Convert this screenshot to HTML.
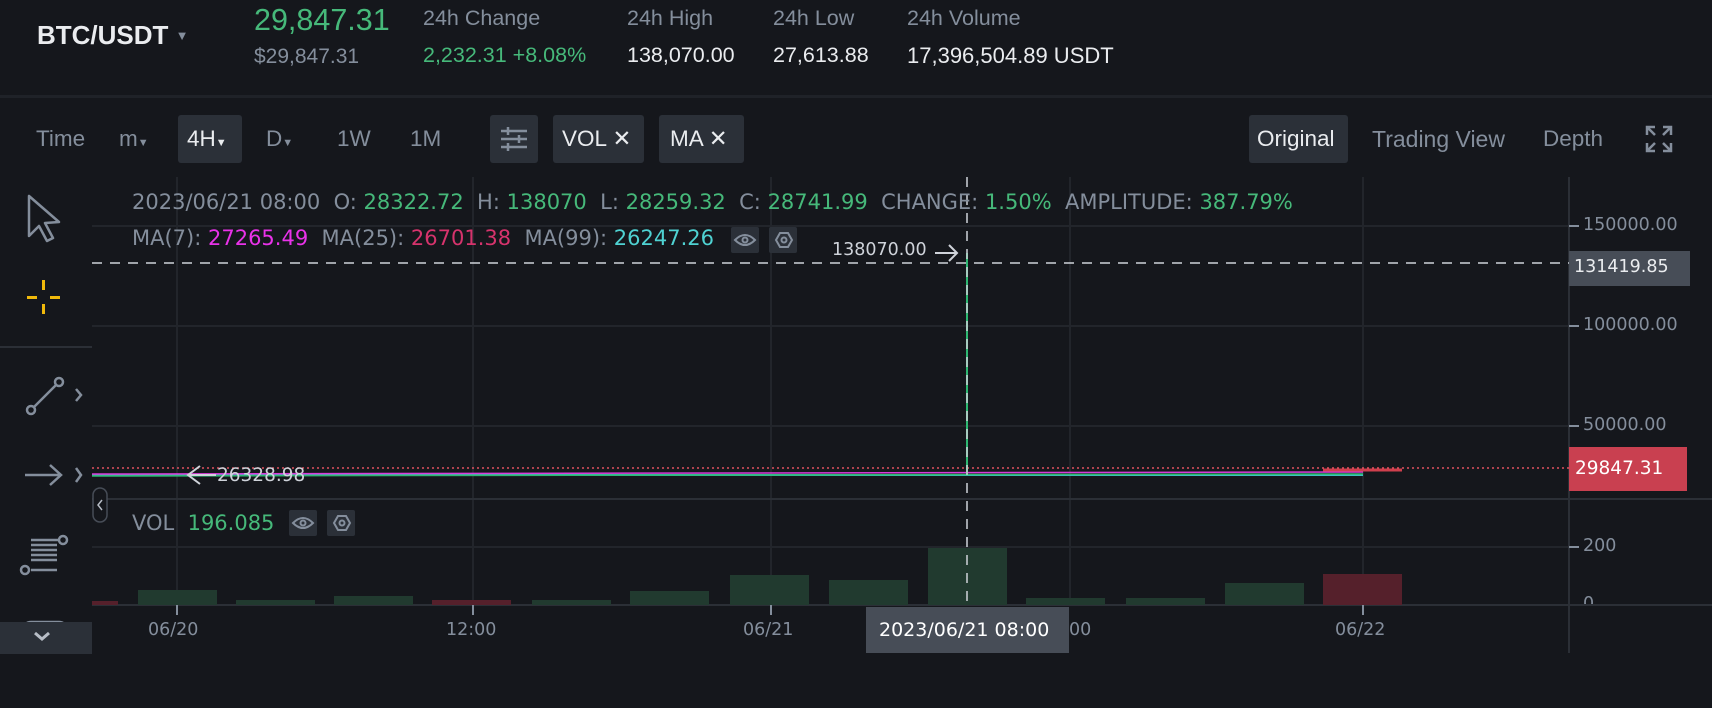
<!DOCTYPE html>
<html><head><meta charset="utf-8"><style>
*{margin:0;padding:0;box-sizing:border-box}
body{width:1712px;height:708px;background:#15171c;overflow:hidden;font-family:"Liberation Sans",sans-serif;color:#eaecef;position:relative}
.a{position:absolute;white-space:nowrap}
.d{font-family:"DejaVu Sans",sans-serif}
.g{color:#848e9c}.gr{color:#46b97a}
.btn{position:absolute;top:115px;height:48px;background:#2b3038;border-radius:3px}
.tb{position:absolute;top:126px;font-size:22.5px;color:#848e9c}
</style></head><body>
<div class="a" style="left:37px;top:20px;font-size:26px;font-weight:bold;color:#eaecef">BTC/USDT <span style="font-size:13px;color:#848e9c;position:relative;top:-4px">▼</span></div>
<div class="a gr" style="left:254px;top:3px;font-size:30.5px">29,847.31</div>
<div class="a g" style="left:254px;top:45px;font-size:21px">$29,847.31</div>
<div class="a g" style="left:423px;top:6px;font-size:21.5px">24h Change</div>
<div class="a gr" style="left:423px;top:43px;font-size:21.5px">2,232.31 +8.08%</div>
<div class="a g" style="left:627px;top:6px;font-size:21.5px">24h High</div>
<div class="a" style="left:627px;top:43px;font-size:21.5px">138,070.00</div>
<div class="a g" style="left:773px;top:6px;font-size:21.5px">24h Low</div>
<div class="a" style="left:773px;top:43px;font-size:21.5px">27,613.88</div>
<div class="a g" style="left:907px;top:6px;font-size:21.5px">24h Volume</div>
<div class="a" style="left:907px;top:43px;font-size:22px">17,396,504.89 USDT</div>
<div class="a" style="left:0;top:95px;width:1712px;height:3px;background:#1f2228"></div>

<div class="tb" style="left:36px">Time</div>
<div class="tb" style="left:119px">m<span style="font-size:11px">▼</span></div>
<div class="btn" style="left:178px;width:64px"></div>
<div class="tb" style="left:187px;color:#eaecef">4H<span style="font-size:11px">▼</span></div>
<div class="tb" style="left:266px">D<span style="font-size:11px">▼</span></div>
<div class="tb" style="left:337px">1W</div>
<div class="tb" style="left:410px">1M</div>
<div class="btn" style="left:490px;width:48px"></div>
<svg class="a" style="left:500px;top:125px" width="28" height="28" viewBox="0 0 28 28" stroke="#848e9c" stroke-width="2.5" fill="none"><path d="M1 6h26M1 14h26M1 22h26M8 2v8M19 10v8M8 18v8"/></svg>
<div class="btn" style="left:553px;width:91px"></div>
<div class="tb" style="left:562px;color:#eaecef">VOL ✕</div>
<div class="btn" style="left:659px;width:85px"></div>
<div class="tb" style="left:670px;color:#eaecef">MA ✕</div>
<div class="btn" style="left:1249px;width:99px"></div>
<div class="tb" style="left:1257px;color:#eaecef">Original</div>
<div class="tb" style="left:1372px;font-size:23px">Trading View</div>
<div class="tb" style="left:1543px">Depth</div>
<svg class="a" style="left:1645px;top:125px" width="28" height="28" viewBox="0 0 28 28" stroke="#848e9c" stroke-width="2.5" fill="none"><path d="M2 10V2h8M2 2l8 8M26 10V2h-8M26 2l-8 8M2 18v8h8M2 26l8-8M26 18v8h-8M26 26l-8-8"/></svg>

<svg class="a" style="left:0;top:0" width="1712" height="708">
<g stroke="#22252b" stroke-width="2">
<line x1="177" y1="177" x2="177" y2="605"/><line x1="473" y1="177" x2="473" y2="605"/><line x1="771" y1="177" x2="771" y2="605"/><line x1="1070" y1="177" x2="1070" y2="605"/><line x1="1363" y1="177" x2="1363" y2="605"/>
<line x1="92" y1="226" x2="1569" y2="226"/><line x1="92" y1="326" x2="1569" y2="326"/><line x1="92" y1="426" x2="1569" y2="426"/><line x1="92" y1="547" x2="1569" y2="547"/>
</g>
<line x1="92" y1="499" x2="1712" y2="499" stroke="#2b2f36" stroke-width="2"/>
<line x1="92" y1="605" x2="1712" y2="605" stroke="#2b2f36" stroke-width="2"/>
<line x1="1569" y1="177" x2="1569" y2="653" stroke="#2b2f36" stroke-width="2"/>
<line x1="0" y1="347" x2="92" y2="347" stroke="#2b2f36" stroke-width="2"/>
<g stroke="#848e9c" stroke-width="2"><line x1="1569" y1="226" x2="1579" y2="226"/><line x1="1569" y1="326" x2="1579" y2="326"/><line x1="1569" y1="426" x2="1579" y2="426"/><line x1="1569" y1="547" x2="1579" y2="547"/><line x1="177" y1="605" x2="177" y2="615"/><line x1="473" y1="605" x2="473" y2="615"/><line x1="771" y1="605" x2="771" y2="615"/><line x1="1363" y1="605" x2="1363" y2="615"/></g>
<g fill="#213a2f">
<rect x="138" y="590" width="79" height="15"/><rect x="236" y="600" width="79" height="5"/><rect x="334" y="596" width="79" height="9"/><rect x="532" y="600" width="79" height="5"/><rect x="630" y="591" width="79" height="14"/><rect x="730" y="575" width="79" height="30"/><rect x="829" y="580" width="79" height="25"/><rect x="928" y="548" width="79" height="57"/><rect x="1026" y="598" width="79" height="7"/><rect x="1126" y="598" width="79" height="7"/><rect x="1225" y="583" width="79" height="22"/>
</g>
<g fill="#55202b"><rect x="92" y="601" width="26" height="4"/><rect x="432" y="600" width="79" height="5"/><rect x="1323" y="574" width="79" height="31"/></g>
<line x1="92" y1="468" x2="1569" y2="468" stroke="#e0505f" stroke-width="1.5" stroke-dasharray="2 3"/>
<line x1="92" y1="475" x2="1363" y2="475" stroke="#3cc0c0" stroke-width="2"/>
<line x1="92" y1="474" x2="1363" y2="472" stroke="#d83cd8" stroke-width="1.5"/>
<line x1="92" y1="476" x2="1363" y2="474" stroke="#2eb872" stroke-width="1.5"/>
<line x1="1323" y1="470" x2="1402" y2="470" stroke="#cf3f4d" stroke-width="3"/>
<line x1="967" y1="253" x2="967" y2="475" stroke="#2eb872" stroke-width="2"/>
<line x1="92" y1="263" x2="1569" y2="263" stroke="#cfd3da" stroke-width="1.5" stroke-dasharray="10 8"/>
<line x1="967" y1="177" x2="967" y2="653" stroke="#cfd3da" stroke-width="1.5" stroke-dasharray="10 8"/>
<path d="M935 253h22M949 245l8 8-8 8" stroke="#cfd3da" stroke-width="2" fill="none"/>
<path d="M188 475h28M200 466l-12 9 12 9" stroke="#cfd3da" stroke-width="2" fill="none"/>
<path d="M29 196l0 40 10-10 8 15 6-3-8-15 14-1z" stroke="#848e9c" stroke-width="2.5" fill="none" stroke-linejoin="round"/>
<g fill="#f0b90b"><rect x="42" y="280" width="3" height="10"/><rect x="42" y="304" width="3" height="10"/><rect x="27" y="296" width="10" height="3"/><rect x="50" y="296" width="10" height="3"/></g>
<g stroke="#848e9c" stroke-width="2.5" fill="none"><circle cx="31" cy="410" r="4"/><circle cx="59" cy="382" r="4"/><line x1="34" y1="407" x2="56" y2="385"/><path d="M76 389l5 6-5 6"/><path d="M25 475h35M50 465l11 10-11 10"/><path d="M76 468l5 7-5 7"/><circle cx="25" cy="570" r="4"/><circle cx="63" cy="540" r="4"/><path d="M31 540h28M31 545h26M31 550h26M31 555h26M31 560h26M31 570h26"/><path d="M25 628q0-6 6-6h28q6 0 6 6"/></g>
<rect x="0" y="622" width="92" height="32" fill="#2b3038"/>
<path d="M35 633l7 6 7-6" stroke="#b7bdc6" stroke-width="3" fill="none"/>
<rect x="93" y="488" width="14" height="34" rx="7" fill="#15171c" stroke="#474d57" stroke-width="1.5"/>
<path d="M102 500l-4 5 4 5" stroke="#b7bdc6" stroke-width="1.5" fill="none"/>
<rect x="731" y="227" width="28" height="26" rx="2" fill="#2b3038"/><rect x="769" y="227" width="28" height="26" rx="2" fill="#2b3038"/>
<rect x="289" y="510" width="28" height="26" rx="2" fill="#2b3038"/><rect x="327" y="510" width="28" height="26" rx="2" fill="#2b3038"/>
<g stroke="#848e9c" stroke-width="2" fill="none"><path d="M735 240q10-10 20 0q-10 10-20 0z"/><circle cx="745" cy="240" r="2.5"/><path d="M776 240l4-7h8l4 7-4 7h-8z"/><circle cx="784" cy="240" r="2.5"/>
<path d="M293 523q10-10 20 0q-10 10-20 0z"/><circle cx="303" cy="523" r="2.5"/><path d="M334 523l4-7h8l4 7-4 7h-8z"/><circle cx="342" cy="523" r="2.5"/></g>
<rect x="1569" y="251" width="121" height="35" fill="#474d57"/>
<rect x="1569" y="447" width="118" height="44" fill="#c94050"/>
<rect x="866" y="607" width="203" height="46" fill="#474d57"/>
</svg>

<div class="a g d" style="left:132px;top:190px;font-size:21px">2023/06/21 08:00 &nbsp;O: <span class="gr">28322.72</span> &nbsp;H: <span class="gr">138070</span> &nbsp;L: <span class="gr">28259.32</span> &nbsp;C: <span class="gr">28741.99</span> &nbsp;CHANGE: <span class="gr">1.50%</span> &nbsp;AMPLITUDE: <span class="gr">387.79%</span></div>
<div class="a g d" style="left:132px;top:226px;font-size:21px">MA(7): <span style="color:#e932e9">27265.49</span> &nbsp;MA(25): <span style="color:#d6336c">26701.38</span> &nbsp;MA(99): <span style="color:#4fd2d2">26247.26</span></div>
<div class="a d" style="left:832px;top:240px;font-size:17.5px;color:#cfd3da">138070.00</div>
<div class="a d" style="left:217px;top:465px;font-size:18.5px;color:#cfd3da">26328.98</div>
<div class="a g d" style="left:132px;top:511px;font-size:21px">VOL &nbsp;<span class="gr">196.085</span></div>
<div class="a g d" style="left:1583px;top:215px;font-size:17.5px">150000.00</div>
<div class="a g d" style="left:1583px;top:315px;font-size:17.5px">100000.00</div>
<div class="a g d" style="left:1583px;top:415px;font-size:17.5px">50000.00</div>
<div class="a g d" style="left:1583px;top:536px;font-size:17.5px">200</div>
<div class="a g d" style="left:1583px;top:594px;font-size:17.5px;height:10px;overflow:hidden">0</div>
<div class="a d" style="left:1574px;top:257px;font-size:17.5px;color:#eaecef">131419.85</div>
<div class="a d" style="left:1575px;top:458px;font-size:18.5px;color:#fff">29847.31</div>
<div class="a g d" style="left:148px;top:620px;font-size:17.5px">06/20</div>
<div class="a g d" style="left:446px;top:620px;font-size:17.5px">12:00</div>
<div class="a g d" style="left:743px;top:620px;font-size:17.5px">06/21</div>
<div class="a g d" style="left:1069px;top:620px;font-size:17.5px">00</div>
<div class="a g d" style="left:1335px;top:620px;font-size:17.5px">06/22</div>
<div class="a d" style="left:879px;top:619px;font-size:19px;color:#fff">2023/06/21 08:00</div>
</body></html>
